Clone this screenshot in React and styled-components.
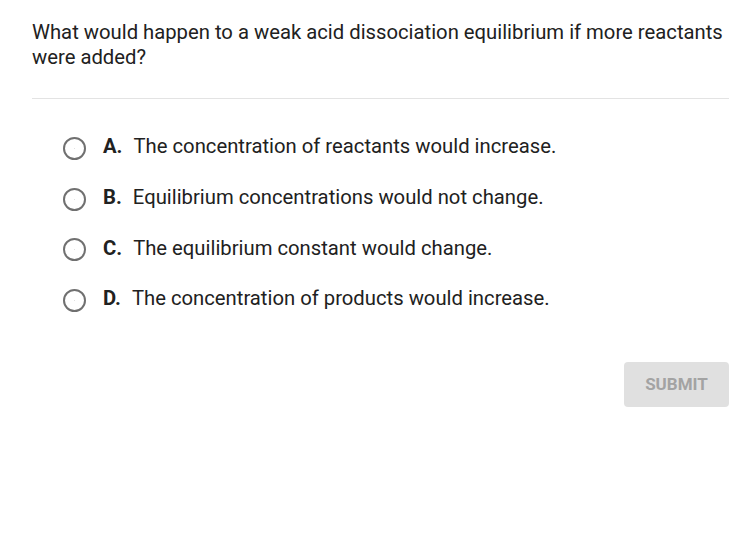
import React, { useState } from 'react';
import styled, { createGlobalStyle } from 'styled-components';

const GlobalStyle = createGlobalStyle`
  html, body {
    margin: 0;
    padding: 0;
    background: #ffffff;
  }
  body {
    font-family: Roboto, "Liberation Sans", Arial, sans-serif;
    color: #212121;
  }
`;

const StyledQuestion = styled.div`
  box-sizing: border-box;
  width: 750px;
  padding: 20px 21px 40px 32px;
`;

const Prompt = styled.p`
  margin: 0;
  font-size: 20.25px;
  line-height: 25px;
  color: #212121;
`;

const Divider = styled.hr`
  margin: 28px 0 22px;
  border: 0;
  border-top: 1px solid #e3e3e3;
  height: 0;
`;

const OptionList = styled.ul`
  list-style: none;
  margin: 0;
  padding: 0 0 0 31px;
`;

const Option = styled.li`
  display: flex;
  align-items: center;
  height: 50.7px;
  cursor: pointer;
  font-size: 20.25px;
  color: #212121;
`;

const Radio = styled.span`
  box-sizing: border-box;
  flex: none;
  width: 23px;
  height: 23px;
  margin: 4px 17px 0 0;
  border: 2px solid ${({ checked }) => (checked ? '#1a73e8' : '#707070')};
  border-radius: 50%;
  display: flex;
  align-items: center;
  justify-content: center;

  &:after {
    content: '';
    width: ${({ checked }) => (checked ? '11px' : '1px')};
    height: ${({ checked }) => (checked ? '11px' : '1px')};
    border-radius: 50%;
    background: ${({ checked }) => (checked ? '#1a73e8' : '#d8d8d8')};
  }
`;

const Letter = styled.b`
  font-weight: 700;
  margin-right: 11px;
`;

const Actions = styled.div`
  display: flex;
  justify-content: flex-end;
  margin-top: 38px;
`;

const SubmitButton = styled.button`
  width: 105px;
  height: 45px;
  border: 0;
  border-radius: 4px;
  background: #e0e0e0;
  color: #a3a3a3;
  font-family: Roboto, "Liberation Sans", Arial, sans-serif;
  font-size: 17px;
  font-weight: 700;
  cursor: default;
`;

const App = () => {
  const [selected, setSelected] = useState(null);

  const options = [
    ['A', 'The concentration of reactants would increase.'],
    ['B', 'Equilibrium concentrations would not change.'],
    ['C', 'The equilibrium constant would change.'],
    ['D', 'The concentration of products would increase.'],
  ];

  return (
    <>
      <GlobalStyle />
      <StyledQuestion>
        <Prompt>
          What would happen to a weak acid dissociation equilibrium if more reactants were
          added?
        </Prompt>

        <Divider />

        <OptionList>
          {options.map(([letter, text]) => (
            <Option key={letter} onClick={() => setSelected(letter)}>
              <Radio checked={selected === letter} />
              <Letter>{letter}.</Letter>
              {text}
            </Option>
          ))}
        </OptionList>

        <Actions>
          <SubmitButton disabled={!selected}>SUBMIT</SubmitButton>
        </Actions>
      </StyledQuestion>
    </>
  );
};

export default App;
